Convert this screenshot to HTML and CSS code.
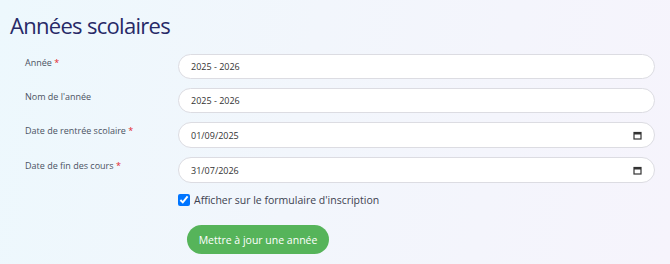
FILE: index.html
```html
<!DOCTYPE html>
<html lang="fr">
<head>
    <meta charset="UTF-8">
    <meta name="viewport" content="width=device-width, initial-scale=1.0">
    <title>Années scolaires</title>
    <link rel="stylesheet" href="styles.css">
</head>
<body>
    <div class="page">
        <h1 class="titre">Années scolaires</h1>
        <form class="formulaire">
            <div class="ligne">
                <label class="etiquette" for="annee">Année <span class="requis">*</span></label>
                <div class="champ">
                    <input type="text" id="annee" value="2025 - 2026">
                </div>
            </div>
            <div class="ligne">
                <label class="etiquette" for="nom">Nom de l'année</label>
                <div class="champ">
                    <input type="text" id="nom" value="2025 - 2026">
                </div>
            </div>
            <div class="ligne">
                <label class="etiquette" for="debut">Date de rentrée scolaire <span class="requis">*</span></label>
                <div class="champ champ-date">
                    <input type="text" id="debut" value="01/09/2025">
                    <svg class="calendrier" width="9" height="9" viewBox="0 0 9 9">
                        <rect x="1" y="1.5" width="7" height="6.5" fill="none" stroke="#333" stroke-width="1.2"/>
                        <rect x="1" y="1.5" width="7" height="2" fill="#333"/>
                    </svg>
                </div>
            </div>
            <div class="ligne">
                <label class="etiquette" for="fin">Date de fin des cours <span class="requis">*</span></label>
                <div class="champ champ-date">
                    <input type="text" id="fin" value="31/07/2026">
                    <svg class="calendrier" width="9" height="9" viewBox="0 0 9 9">
                        <rect x="1" y="1.5" width="7" height="6.5" fill="none" stroke="#333" stroke-width="1.2"/>
                        <rect x="1" y="1.5" width="7" height="2" fill="#333"/>
                    </svg>
                </div>
            </div>
            <div class="case">
                <input type="checkbox" id="afficher" checked>
                <label for="afficher">Afficher sur le formulaire d'inscription</label>
            </div>
            <div class="actions">
                <button type="button" class="bouton">Mettre à jour une année</button>
            </div>
        </form>
    </div>
</body>
</html>
```

FILE: styles.css
```css
body {
    margin: 0;
    height: 264px;
    font-family: "Open Sans", "Noto Sans", sans-serif;
    background: linear-gradient(100deg, #edf8fd 0%, #f2f6fc 45%, #f6f4fc 100%);
    overflow: hidden;
}
.page {
    padding: 0 15px 0 10px;
}
.titre {
    margin: 0;
    padding-top: 11px;
    font-size: 22px;
    font-weight: 500;
    line-height: 28px;
    letter-spacing: -0.7px;
    color: #272967;
}
.formulaire {
    margin-top: 15px;
}
.ligne {
    display: flex;
    align-items: flex-start;
    margin-bottom: 9px;
}
.etiquette {
    width: 153px;
    padding-left: 15px;
    padding-top: 2px;
    font-size: 9px;
    line-height: 14px;
    color: #4b5262;
}
.requis {
    color: #e3262c;
}
.champ {
    flex: 1;
    display: flex;
    align-items: center;
    height: 25px;
    box-sizing: border-box;
    border: 1px solid #dcdce2;
    border-radius: 13px;
    background: #fff;
    padding: 0 12px;
}
.champ-date {
    height: 26px;
}
.champ input {
    flex: 1;
    border: none;
    outline: none;
    background: transparent;
    padding: 0;
    font-family: inherit;
    font-size: 9px;
    color: #333;
}
.case {
    display: flex;
    align-items: center;
    padding-left: 168px;
    margin-top: 10px;
    font-size: 10.5px;
    color: #3d4250;
}
.case input {
    margin: 0 4px 0 0;
    width: 12px;
    height: 12px;
}
.actions {
    padding-left: 177px;
    margin-top: 18px;
}
.bouton {
    width: 142px;
    height: 29px;
    padding: 0;
    border: none;
    border-radius: 15px;
    background: #56b45a;
    color: #fff;
    font-family: inherit;
    font-size: 10.5px;
    white-space: nowrap;
}
```
